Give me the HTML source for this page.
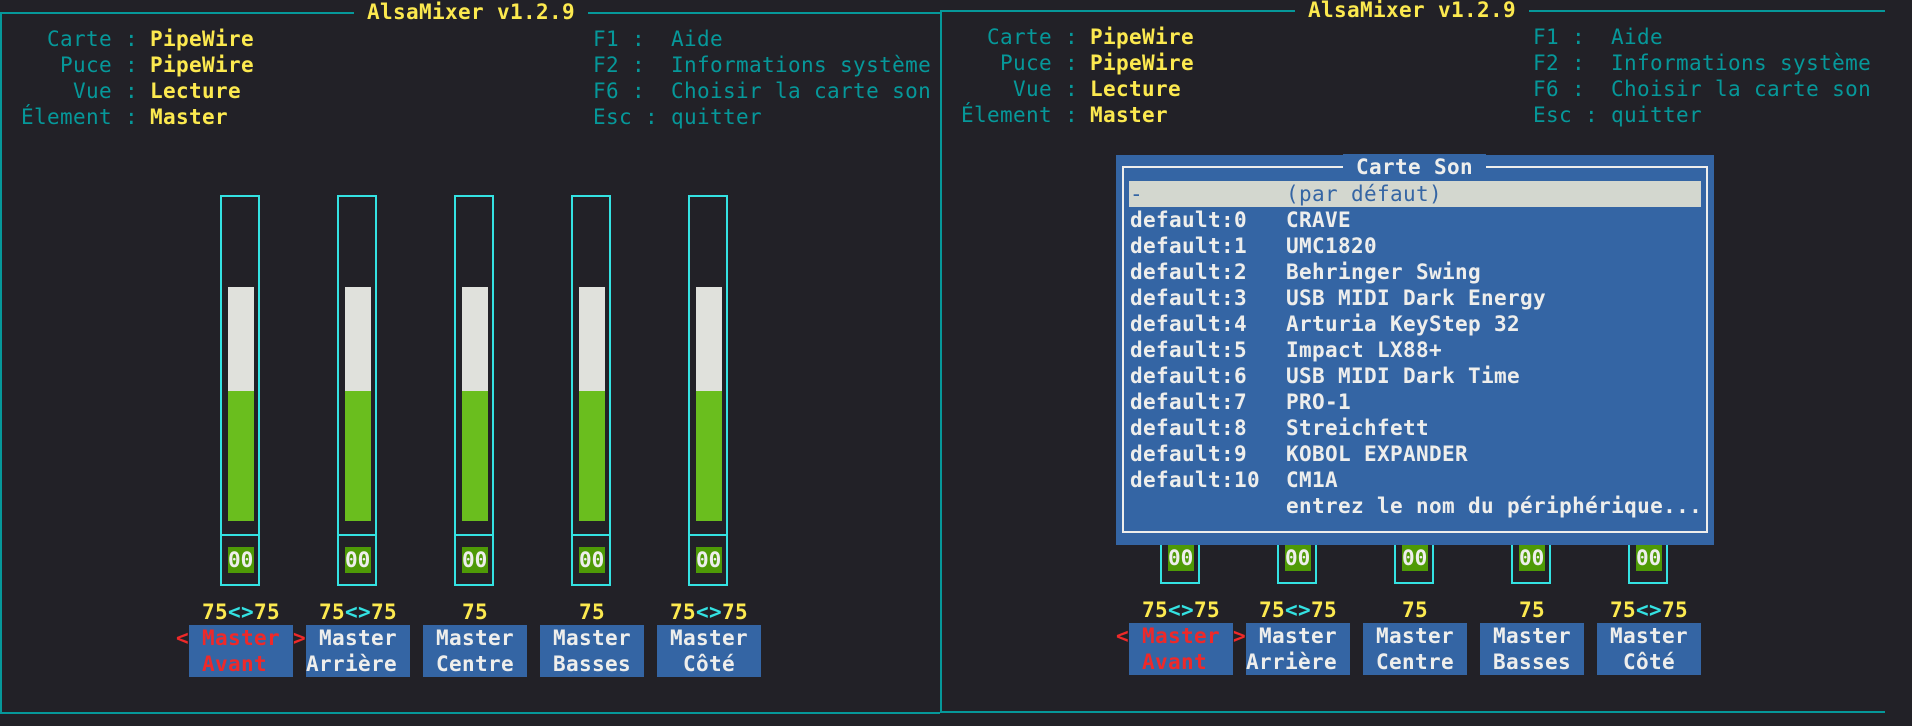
<!DOCTYPE html>
<html><head><meta charset="utf-8"><style>
*{margin:0;padding:0;box-sizing:border-box}
body{width:1912px;height:726px;background:#222127;position:relative;overflow:hidden;font-family:"DejaVu Sans Mono","Liberation Mono",monospace;font-size:21px;letter-spacing:0.36px;}
.t{position:absolute;height:26px;line-height:26px;white-space:pre}
.c{color:#06989a}.y{color:#fce94f;font-weight:bold}.w{color:#eeeeec;font-weight:bold}
.l{position:absolute;background:#06989a}
.box{position:absolute;width:40px;height:391px;border:2px solid #34e2e2}
.div{position:absolute;left:0;right:0;top:337px;height:2px;background:#34e2e2}
.wh{position:absolute;left:6px;width:26px;top:90px;height:104px;background:#e0e1dc}
.gr{position:absolute;left:6px;width:26px;top:194px;height:130px;background:#6abe1e}
.zz{position:absolute;left:6px;width:26px;top:350px;height:26px;background:#4e9a06;color:#eeeeec;line-height:26px;letter-spacing:0;font-weight:bold}
.btn{position:absolute;width:104px;height:52px;background:#3465a4}
</style></head><body>
<div class="l" style="left:0;top:12px;width:940px;height:2px"></div>
<div class="l" style="left:0;top:12px;width:2px;height:702px"></div>
<div class="l" style="left:0;top:712px;width:940px;height:2px"></div>
<div class="t y" style="left:354px;top:-1px;background:#222127"> AlsaMixer v1.2.9 </div>
<div class="l" style="left:940px;top:10px;width:945px;height:2px"></div>
<div class="l" style="left:940px;top:10px;width:2px;height:702px"></div>
<div class="l" style="left:940px;top:711px;width:945px;height:2px"></div>
<div class="t y" style="left:1295px;top:-3px;background:#222127"> AlsaMixer v1.2.9 </div>

<div class="t c" style="left:21px;top:26px">  Carte : </div><div class="t y" style="left:150px;top:26px">PipeWire</div>
<div class="t c" style="left:21px;top:52px">   Puce : </div><div class="t y" style="left:150px;top:52px">PipeWire</div>
<div class="t c" style="left:21px;top:78px">    Vue : </div><div class="t y" style="left:150px;top:78px">Lecture</div>
<div class="t c" style="left:21px;top:104px">Élement : </div><div class="t y" style="left:150px;top:104px">Master</div>
<div class="t c" style="left:593px;top:26px">F1 :  Aide</div>
<div class="t c" style="left:593px;top:52px">F2 :  Informations système</div>
<div class="t c" style="left:593px;top:78px">F6 :  Choisir la carte son</div>
<div class="t c" style="left:593px;top:104px">Esc : quitter</div>
<div class="t c" style="left:961px;top:24px">  Carte : </div><div class="t y" style="left:1090px;top:24px">PipeWire</div>
<div class="t c" style="left:961px;top:50px">   Puce : </div><div class="t y" style="left:1090px;top:50px">PipeWire</div>
<div class="t c" style="left:961px;top:76px">    Vue : </div><div class="t y" style="left:1090px;top:76px">Lecture</div>
<div class="t c" style="left:961px;top:102px">Élement : </div><div class="t y" style="left:1090px;top:102px">Master</div>
<div class="t c" style="left:1533px;top:24px">F1 :  Aide</div>
<div class="t c" style="left:1533px;top:50px">F2 :  Informations système</div>
<div class="t c" style="left:1533px;top:76px">F6 :  Choisir la carte son</div>
<div class="t c" style="left:1533px;top:102px">Esc : quitter</div>

<div class="box" style="left:220px;top:195px"><div class="div"></div><div class="wh"></div><div class="gr"></div><div class="zz">00</div></div>
<div class="box" style="left:337px;top:195px"><div class="div"></div><div class="wh"></div><div class="gr"></div><div class="zz">00</div></div>
<div class="box" style="left:454px;top:195px"><div class="div"></div><div class="wh"></div><div class="gr"></div><div class="zz">00</div></div>
<div class="box" style="left:571px;top:195px"><div class="div"></div><div class="wh"></div><div class="gr"></div><div class="zz">00</div></div>
<div class="box" style="left:688px;top:195px"><div class="div"></div><div class="wh"></div><div class="gr"></div><div class="zz">00</div></div>
<div class="t y" style="left:202px;top:599px">75<span style="color:#34e2e2">&lt;&gt;</span>75</div>
<div class="t y" style="left:319px;top:599px">75<span style="color:#34e2e2">&lt;&gt;</span>75</div>
<div class="t y" style="left:462px;top:599px">75</div>
<div class="t y" style="left:579px;top:599px">75</div>
<div class="t y" style="left:670px;top:599px">75<span style="color:#34e2e2">&lt;&gt;</span>75</div>
<div class="btn" style="left:189px;top:625px"></div><div class="btn" style="left:306px;top:625px"></div><div class="btn" style="left:423px;top:625px"></div><div class="btn" style="left:540px;top:625px"></div><div class="btn" style="left:657px;top:625px"></div>
<div class="t" style="left:176px;top:625px;color:#ef2929;font-weight:bold">&lt;</div>
<div class="t" style="left:293px;top:625px;color:#ef2929;font-weight:bold">&gt;</div>
<div class="t" style="left:189px;top:625px;color:#ef2929;font-weight:bold"> Master</div>
<div class="t" style="left:189px;top:651px;color:#ef2929;font-weight:bold"> Avant</div>
<div class="t w" style="left:306px;top:625px"> Master</div><div class="t w" style="left:306px;top:651px">Arrière</div>
<div class="t w" style="left:423px;top:625px"> Master</div><div class="t w" style="left:423px;top:651px"> Centre</div>
<div class="t w" style="left:540px;top:625px"> Master</div><div class="t w" style="left:540px;top:651px"> Basses</div>
<div class="t w" style="left:657px;top:625px"> Master</div><div class="t w" style="left:657px;top:651px">  Côté</div>

<div class="box" style="left:1160px;top:193px"><div class="div"></div><div class="wh"></div><div class="gr"></div><div class="zz">00</div></div>
<div class="box" style="left:1277px;top:193px"><div class="div"></div><div class="wh"></div><div class="gr"></div><div class="zz">00</div></div>
<div class="box" style="left:1394px;top:193px"><div class="div"></div><div class="wh"></div><div class="gr"></div><div class="zz">00</div></div>
<div class="box" style="left:1511px;top:193px"><div class="div"></div><div class="wh"></div><div class="gr"></div><div class="zz">00</div></div>
<div class="box" style="left:1628px;top:193px"><div class="div"></div><div class="wh"></div><div class="gr"></div><div class="zz">00</div></div>
<div class="t y" style="left:1142px;top:597px">75<span style="color:#34e2e2">&lt;&gt;</span>75</div>
<div class="t y" style="left:1259px;top:597px">75<span style="color:#34e2e2">&lt;&gt;</span>75</div>
<div class="t y" style="left:1402px;top:597px">75</div>
<div class="t y" style="left:1519px;top:597px">75</div>
<div class="t y" style="left:1610px;top:597px">75<span style="color:#34e2e2">&lt;&gt;</span>75</div>
<div class="btn" style="left:1129px;top:623px"></div><div class="btn" style="left:1246px;top:623px"></div><div class="btn" style="left:1363px;top:623px"></div><div class="btn" style="left:1480px;top:623px"></div><div class="btn" style="left:1597px;top:623px"></div>
<div class="t" style="left:1116px;top:623px;color:#ef2929;font-weight:bold">&lt;</div>
<div class="t" style="left:1233px;top:623px;color:#ef2929;font-weight:bold">&gt;</div>
<div class="t" style="left:1129px;top:623px;color:#ef2929;font-weight:bold"> Master</div>
<div class="t" style="left:1129px;top:649px;color:#ef2929;font-weight:bold"> Avant</div>
<div class="t w" style="left:1246px;top:623px"> Master</div><div class="t w" style="left:1246px;top:649px">Arrière</div>
<div class="t w" style="left:1363px;top:623px"> Master</div><div class="t w" style="left:1363px;top:649px"> Centre</div>
<div class="t w" style="left:1480px;top:623px"> Master</div><div class="t w" style="left:1480px;top:649px"> Basses</div>
<div class="t w" style="left:1597px;top:623px"> Master</div><div class="t w" style="left:1597px;top:649px">  Côté</div>

<div style="position:absolute;left:1116px;top:155px;width:598px;height:390px;background:#3465a4"></div>
<div style="position:absolute;left:1122px;top:166px;width:586px;height:367px;border:2px solid #eeeeec"></div>
<div class="t w" style="left:1343px;top:154px;background:#3465a4"> Carte Son </div>
<div style="position:absolute;left:1129px;top:181px;width:572px;height:26px;background:#d3d7cf"></div>
<div class="t" style="left:1130px;top:181px;color:#3465a4">-</div>
<div class="t" style="left:1286px;top:181px;color:#3465a4">(par défaut)</div>
<div class="t w" style="left:1130px;top:207px">default:0</div><div class="t w" style="left:1286px;top:207px">CRAVE</div>
<div class="t w" style="left:1130px;top:233px">default:1</div><div class="t w" style="left:1286px;top:233px">UMC1820</div>
<div class="t w" style="left:1130px;top:259px">default:2</div><div class="t w" style="left:1286px;top:259px">Behringer Swing</div>
<div class="t w" style="left:1130px;top:285px">default:3</div><div class="t w" style="left:1286px;top:285px">USB MIDI Dark Energy</div>
<div class="t w" style="left:1130px;top:311px">default:4</div><div class="t w" style="left:1286px;top:311px">Arturia KeyStep 32</div>
<div class="t w" style="left:1130px;top:337px">default:5</div><div class="t w" style="left:1286px;top:337px">Impact LX88+</div>
<div class="t w" style="left:1130px;top:363px">default:6</div><div class="t w" style="left:1286px;top:363px">USB MIDI Dark Time</div>
<div class="t w" style="left:1130px;top:389px">default:7</div><div class="t w" style="left:1286px;top:389px">PRO-1</div>
<div class="t w" style="left:1130px;top:415px">default:8</div><div class="t w" style="left:1286px;top:415px">Streichfett</div>
<div class="t w" style="left:1130px;top:441px">default:9</div><div class="t w" style="left:1286px;top:441px">KOBOL EXPANDER</div>
<div class="t w" style="left:1130px;top:467px">default:10</div><div class="t w" style="left:1286px;top:467px">CM1A</div>
<div class="t w" style="left:1286px;top:493px">entrez le nom du périphérique...</div>
</body></html>
